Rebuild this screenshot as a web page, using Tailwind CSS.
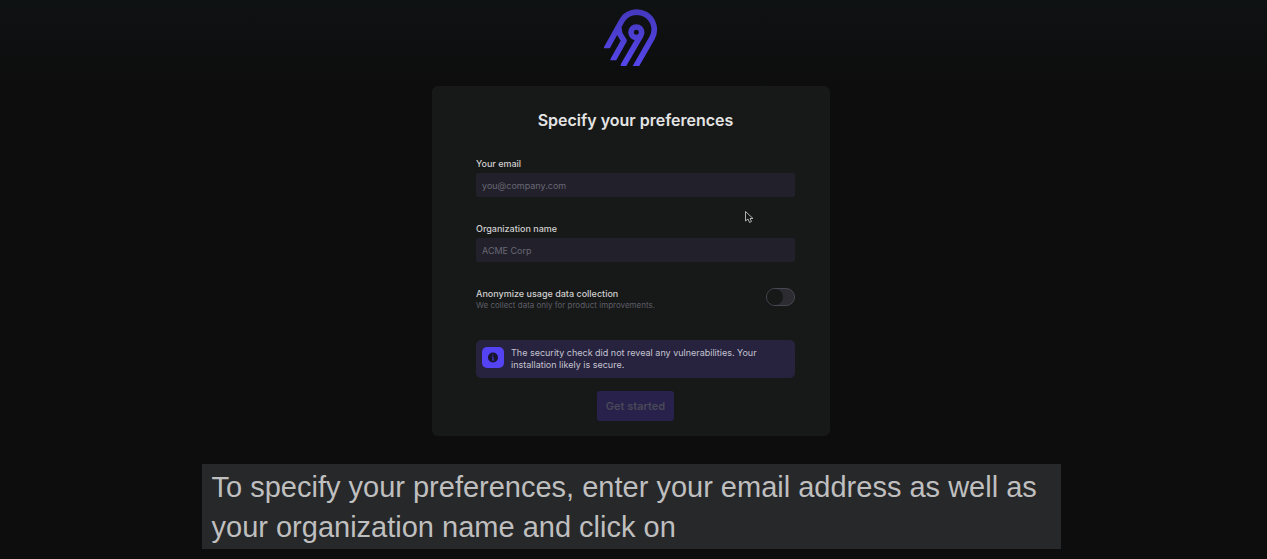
<!DOCTYPE html>
<html lang="en">
<head>
<meta charset="utf-8">
<meta name="viewport" content="width=device-width, initial-scale=1">
<title>Specify your preferences</title>
<script src="https://cdn.jsdelivr.net/npm/@tailwindcss/browser@4"></script>
</head>
<body class="flex min-h-screen flex-col items-center bg-[#0d0d0d] bg-linear-to-b from-[#0f1213] to-[#0d0d0d] to-15% pr-[5px] font-['Inter',sans-serif] text-[#d0d0d0]">
  <header class="pt-2">
    <svg class="h-[60px] w-[54px]" viewBox="43 24 162 180" fill="none" stroke="url(#brand)" stroke-width="17" stroke-linejoin="round" role="img" aria-label="Logo">
      <defs>
        <linearGradient id="brand" gradientUnits="userSpaceOnUse" x1="0" y1="25" x2="0" y2="200"><stop stop-color="#4538bd"/><stop offset="1" stop-color="#5546ea"/></linearGradient>
        <clipPath id="feet"><path d="M20 10H230V198H93V181H62V145H20Z"/></clipPath>
      </defs>
      <g clip-path="url(#feet)">
        <path d="M44 157L96 63A52 52 0 0 1 187 114L132 210"/>
        <circle cx="140" cy="97" r="16"/>
        <path d="M154 105L93 210"/>
        <path d="M87 82L90 101L103 122L63 193"/>
      </g>
    </svg>
  </header>

  <main class="mt-[18px] w-full max-w-[398px] rounded-md bg-[#171918] pt-[22px] pr-[35px] pb-[15px] pl-11">
    <h1 class="text-center text-base leading-6 font-semibold text-[#e4e4e4]">Specify your preferences</h1>
    <form class="mt-[26px] flex flex-col">
      <label for="email" class="text-[9px] leading-3 font-medium">Your email</label>
      <input id="email" type="email" placeholder="you@company.com" class="mt-[3px] h-6 w-full rounded-xs bg-[#22212b] px-1.5 text-[9px] placeholder:text-[#686773]">

      <label for="org" class="mt-[26px] text-[9px] leading-3 font-medium">Organization name</label>
      <input id="org" type="text" placeholder="ACME Corp" class="mt-[3px] h-6 w-full rounded-xs bg-[#22212b] px-1.5 text-[9px] placeholder:text-[#686773]">

      <div class="mt-[26px] flex items-start justify-between">
        <div>
          <label for="anon" class="block text-[9px] leading-3 font-medium">Anonymize usage data collection</label>
          <p id="anon-help" class="text-[8px] leading-[10px] text-[#5d5d67]">We collect data only for product improvements.</p>
        </div>
        <input id="anon" type="checkbox" role="switch" aria-describedby="anon-help" class="h-[18px] w-[29px] appearance-none rounded-full border border-[#484751] bg-[#2b2b31] before:block before:size-4 before:rounded-full before:bg-[#171818] checked:bg-[#5444f0] checked:before:ml-auto">
      </div>

      <div class="mt-[30px] flex gap-[7px] rounded-[5px] bg-[#27233f] px-1.5 py-[7px]">
        <svg class="size-[22px] shrink-0" viewBox="0 0 22 22" aria-hidden="true">
          <rect width="22" height="21" rx="5" fill="#5343f2"/>
          <circle cx="11" cy="10.5" r="5" fill="#18152f"/>
          <path d="M11 7.5v1M10 10h1v3M9.8 13h2.4" fill="none" stroke="#493bd0" stroke-width="1"/>
        </svg>
        <p class="text-[9px] leading-3 text-[#c5c3d0]">The security check did not reveal any vulnerabilities. Your installation likely is secure.</p>
      </div>

      <button type="submit" disabled class="mt-[13px] h-[30px] self-center rounded-[3px] bg-[#27214c] px-[9px] text-[11px] font-semibold text-[#4a4957]">Get started</button>
    </form>
  </main>

  <p class="mt-7 w-full max-w-[859px] bg-[#27282a] px-2.5 pt-[3px] pb-0.5 font-['Liberation_Sans',sans-serif] text-[29px] leading-10 text-[#bfbfbf]">To specify your preferences, enter your email address as well as your organization name and click on</p>

  <svg class="pointer-events-none absolute left-[744px] top-[210px] h-[14px] w-[10px]" viewBox="0 0 10 14" aria-hidden="true"><path d="M1.5 1.5V11L4 9L5.5 12.5L7.5 11.5L6 8.5H9Z" fill="#171918" stroke="#b0b0b0" stroke-linejoin="round"/></svg>
</body>
</html>
